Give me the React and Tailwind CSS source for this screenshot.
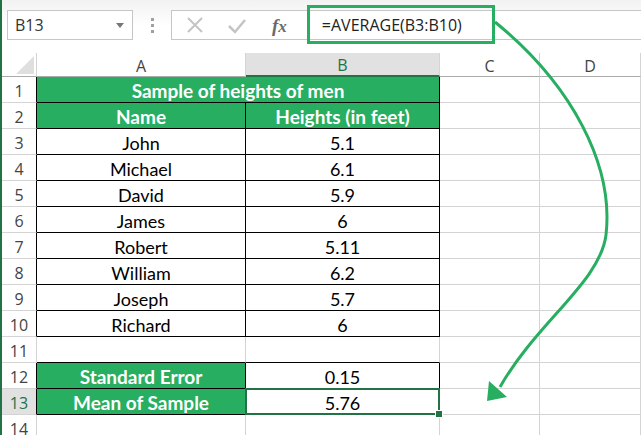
import React from "react";

const GREEN = "bg-[#27ae60]";
const BOLD = "text-white font-bold text-[19px]";

const names = [
  ["John", "5.1"],
  ["Michael", "6.1"],
  ["David", "5.9"],
  ["James", "6"],
  ["Robert", "5.11"],
  ["William", "6.2"],
  ["Joseph", "5.7"],
  ["Richard", "6"],
];

function RowHead({ n, dark, sel }) {
  return (
    <div
      className={`h-[26px] pt-[2px] flex items-center justify-center border-b border-b-[#d4d4d4] border-r ${
        dark ? "border-r-black" : "border-r-[#d4d4d4]"
      } ${sel ? "bg-[#e1e1e1] text-[#217346]" : "text-[#444]"} text-[16px] font-['Open_Sans',sans-serif]`}
    >
      {n}
    </div>
  );
}

function Cell({ children, cls = "" }) {
  return (
    <div className={`h-[26px] pt-[3px] flex items-center justify-center border-r border-b text-[18px] ${cls}`}>
      {children}
    </div>
  );
}

function EmptyCD() {
  return (
    <>
      <Cell cls="border-r-[#d4d4d4] border-b-[#d4d4d4]" />
      <Cell cls="border-r-[#d4d4d4] border-b-[#d4d4d4]" />
    </>
  );
}

export default function App() {
  return (
    <div className="relative w-[641px] h-[435px] overflow-hidden bg-white border-l-2 border-l-[#217346] font-['Lato',sans-serif] text-black">
      {/* formula bar */}
      <div className="h-[53px] flex items-start pt-[10px] bg-gradient-to-b from-[#f2f2f2] via-white to-white">
        <div className="ml-[5px] w-[126px] h-[30px] border border-[#c6c6c6] bg-white flex items-center justify-between pl-[7px] pr-[8px]">
          <span className="text-[16px] text-[#333] font-['Open_Sans',sans-serif]">B13</span>
          <span className="w-0 h-0 border-l-[4px] border-r-[4px] border-t-[5px] border-l-transparent border-r-transparent border-t-[#777]" />
        </div>
        <div className="w-[38px] h-[30px] flex flex-col items-center justify-center gap-[3px]">
          <span className="w-[3px] h-[3px] bg-[#a0a0a0]" />
          <span className="w-[3px] h-[3px] bg-[#a0a0a0]" />
          <span className="w-[3px] h-[3px] bg-[#a0a0a0]" />
        </div>
        <div className="flex-1 h-[30px] border border-r-0 border-[#c6c6c6] bg-white flex items-center">
          <svg width="100" height="28" viewBox="0 0 100 28" className="shrink-0">
            <path d="M16 7 L30 21 M30 7 L16 21" stroke="#c4c4c4" strokeWidth="2" fill="none" />
            <path d="M57 15 L63 21 L73 9" stroke="#c4c4c4" strokeWidth="2.5" fill="none" />
          </svg>
          <span className="text-[19px] italic font-bold text-[#6a6a6a] font-['Liberation_Serif',serif] leading-none">
            f<span className="text-[17px]">x</span>
          </span>
          <span className="ml-[35px] text-[16px] text-[#222] font-['Open_Sans',sans-serif]">=AVERAGE(B3:B10)</span>
        </div>
      </div>

      {/* grid */}
      <div className="grid grid-cols-[35px_209px_194px_100px_101px]">
        {/* header row */}
        <div className="relative h-[24px] border-b border-b-[#ababab] border-r border-r-[#d4d4d4]">
          <svg width="20" height="20" className="absolute left-[14px] top-[3px]">
            <path d="M18 0 L18 18 L0 18 Z" fill="#dfdfdf" />
          </svg>
        </div>
        <div className="h-[24px] pt-[2px] flex items-center justify-center border-b border-b-[#ababab] border-r border-r-[#d4d4d4] text-[16px] text-[#444] font-['Open_Sans',sans-serif]">
          A
        </div>
        <div className="h-[24px] pt-[2px] flex items-center justify-center border-b-2 border-b-[#217346] border-r border-r-[#d4d4d4] bg-[#e1e1e1] text-[16px] text-[#217346] font-['Open_Sans',sans-serif]">
          B
        </div>
        <div className="h-[24px] pt-[2px] flex items-center justify-center border-b border-b-[#ababab] border-r border-r-[#d4d4d4] text-[16px] text-[#444] font-['Open_Sans',sans-serif]">
          C
        </div>
        <div className="h-[24px] pt-[2px] flex items-center justify-center border-b border-b-[#ababab] border-r border-r-[#d4d4d4] text-[16px] text-[#444] font-['Open_Sans',sans-serif]">
          D
        </div>

        {/* row 1 */}
        <RowHead n="1" dark />
        <div className={`col-span-2 h-[26px] pt-[3px] flex items-center justify-center border-r border-b border-black ${GREEN} ${BOLD}`}>
          Sample of heights of men
        </div>
        <EmptyCD />

        {/* row 2 */}
        <RowHead n="2" dark />
        <Cell cls={`border-black ${GREEN} ${BOLD}`}>Name</Cell>
        <Cell cls={`border-black ${GREEN} ${BOLD}`}>Heights (in feet)</Cell>
        <EmptyCD />

        {names.map(([n, h], i) => (
          <React.Fragment key={n}>
            <RowHead n={String(i + 3)} dark />
            <Cell cls="border-black">{n}</Cell>
            <Cell cls="border-black">{h}</Cell>
            <EmptyCD />
          </React.Fragment>
        ))}

        {/* row 11 */}
        <RowHead n="11" />
        <Cell cls="border-r-[#d4d4d4] border-b-black" />
        <Cell cls="border-r-[#d4d4d4] border-b-black" />
        <EmptyCD />

        {/* row 12 */}
        <RowHead n="12" dark />
        <Cell cls={`border-black ${GREEN} ${BOLD}`}>Standard Error</Cell>
        <Cell cls="border-r-black border-b-[#217346]">0.15</Cell>
        <EmptyCD />

        {/* row 13 */}
        <RowHead n="13" dark sel />
        <Cell cls={`border-black ${GREEN} ${BOLD}`}>Mean of Sample</Cell>
        <div className="relative h-[26px] pt-[3px] flex items-center justify-center border-r border-b border-r-[#d4d4d4] border-b-[#d4d4d4] text-[18px]">
          5.76
          <div className="absolute -left-[1px] -top-[1px] -right-[1px] -bottom-[1px] border-2 border-[#217346]" />
          <div className="absolute -right-[4px] -bottom-[4px] w-[6px] h-[6px] bg-[#217346] border border-white box-content" />
        </div>
        <EmptyCD />

        {/* row 14 */}
        <RowHead n="14" />
        <Cell cls="border-r-[#d4d4d4] border-b-[#d4d4d4]" />
        <Cell cls="border-r-[#d4d4d4] border-b-[#d4d4d4]" />
        <EmptyCD />
      </div>

      {/* annotation box around formula */}
      <div className="absolute left-[305px] top-[5px] w-[188px] h-[39px] border-[3px] border-[#27ae60]" />

      {/* arrow */}
      <svg className="absolute left-0 top-0 pointer-events-none" width="641" height="435" viewBox="0 0 641 435">
        <path
          d="M493 22 C570 85 612 165 604 235 C598 282 535 322 498 387"
          stroke="#27ae60"
          strokeWidth="3"
          fill="none"
        />
        <path d="M487 381 L485 401 L505 397 Z" fill="#27ae60" />
      </svg>
    </div>
  );
}
